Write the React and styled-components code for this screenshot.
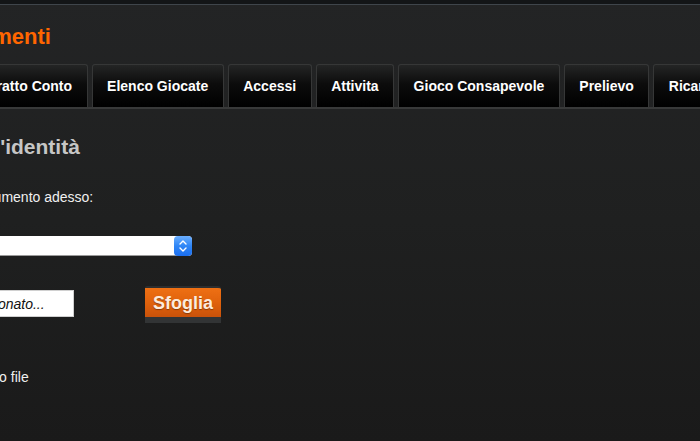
import React from "react";
import styled, { createGlobalStyle } from "styled-components";

const GlobalStyle = createGlobalStyle`
  html, body {
    margin: 0;
    padding: 0;
    height: 100%;
    background: #1a1a1a;
  }
  body {
    font-family: "Liberation Sans", Arial, sans-serif;
    overflow: hidden;
  }
`;

const Viewport = styled.div`
  width: 700px;
  height: 441px;
  overflow: hidden;
  background: linear-gradient(#232425 0%, #1f2020 50%, #1a1a1a 100%);
`;

const TopBar = styled.div`
  height: 4px;
  background: #131517;
  border-bottom: 1px solid #3f454b;
`;

/* the page is scrolled horizontally, so its left part is out of view */
const Shell = styled.div`
  margin-left: -151px;
  width: 1000px;
`;

const Header = styled.header`
  padding: 19px 0 0 5px;
  height: 40px;
`;

const PageTitle = styled.h1`
  margin: 0;
  font-size: 22px;
  line-height: 26px;
  font-weight: 700;
  color: #ff6600;
  white-space: nowrap;
`;

const TabBar = styled.nav`
  display: flex;
  gap: 4px;
  padding-left: 3px;
  border-bottom: 2px solid #383939;
  white-space: nowrap;
`;

const Tab = styled.a`
  display: flex;
  align-items: center;
  height: 43px;
  padding: 0 14.5px;
  box-sizing: border-box;
  border: 1px solid #363737;
  border-bottom: none;
  border-radius: 3px 3px 0 0;
  background: linear-gradient(#242525 0%, #0c0c0c 45%, #000 100%);
  color: #fff;
  font-size: 14px;
  font-weight: 700;
  text-decoration: none;
  flex-shrink: 0;
`;

const Main = styled.main`
  padding: 26px 0 0 17px;
`;

const SectionTitle = styled.h2`
  margin: 0;
  font-size: 21px;
  line-height: 24px;
  font-weight: 700;
  color: #c6c6c6;
  white-space: nowrap;
`;

const Text = styled.p`
  margin: ${(p) => p.$top || 0}px 0 0;
  font-size: 14px;
  line-height: 17px;
  color: #f0f0f0;
  white-space: nowrap;
`;

const SelectBox = styled.div`
  margin-top: 30px;
  width: 326px;
  height: 20px;
  display: flex;
  justify-content: flex-end;
  background: #fff;
  border-radius: 3px 4px 4px 3px;
  box-shadow: inset 0 -1px 0 #9a9a9a;
`;

const Stepper = styled.span`
  width: 18px;
  height: 20px;
  border-radius: 4px;
  background: linear-gradient(#6aaeff 0%, #2f86f6 50%, #1a6ef0 100%);
  display: flex;
  align-items: center;
  justify-content: center;
`;

const FileRow = styled.div`
  margin-top: 30px;
  display: flex;
  align-items: flex-start;
  gap: 71px;
`;

const FileName = styled.div`
  margin-top: 4px;
  width: 208px;
  height: 27px;
  box-sizing: border-box;
  padding-left: 22px;
  display: flex;
  align-items: center;
  background: #fff;
  border: 1px solid #d0d0d0;
  color: #111;
  font-size: 14px;
  font-style: italic;
  white-space: nowrap;
  overflow: hidden;
`;

const BrowseButton = styled.button`
  height: 37px;
  padding: 1px 8px 0;
  box-sizing: border-box;
  border: none;
  border-top: 2px solid #2d2e2f;
  border-bottom: 6px solid #323435;
  border-radius: 2px 3px 0 0;
  background: linear-gradient(#ee7014 0%, #e0620c 50%, #c9520a 100%);
  color: #fdebdc;
  font-family: "Liberation Sans", Arial, sans-serif;
  font-size: 18px;
  font-weight: 700;
  line-height: 28px;
  text-shadow: 0 1px 1px rgba(0, 0, 0, 0.35);
  cursor: pointer;
`;

const tabs = [
  "Documenti",
  "Estratto Conto",
  "Elenco Giocate",
  "Accessi",
  "Attivita",
  "Gioco Consapevole",
  "Prelievo",
  "Ricarica",
];

const StepperIcon = () => (
  <svg width="10" height="14" viewBox="0 0 10 14" fill="none">
    <path d="M2 5 L5 2 L8 5" stroke="#fff" strokeWidth="1.4" strokeLinecap="round" strokeLinejoin="round" />
    <path d="M2 9 L5 12 L8 9" stroke="#fff" strokeWidth="1.4" strokeLinecap="round" strokeLinejoin="round" />
  </svg>
);

const App = () => {
  return (
    <>
      <GlobalStyle />
      <Viewport>
        <TopBar />
        <Shell>
          <Header>
            <PageTitle>Carica i documenti</PageTitle>
          </Header>
          <TabBar>
            {tabs.map((t) => (
              <Tab key={t} href="#">
                {t}
              </Tab>
            ))}
          </TabBar>
          <Main>
            <SectionTitle>Documento d'identità</SectionTitle>
            <Text $top={30}>Scegli e carica il documento adesso:</Text>
            <SelectBox>
              <Stepper>
                <StepperIcon />
              </Stepper>
            </SelectBox>
            <FileRow>
              <FileName>Nessun file selezionato...</FileName>
              <BrowseButton>Sfoglia</BrowseButton>
            </FileRow>
            <Text $top={46}>Oppure invia un nuovo file</Text>
          </Main>
        </Shell>
      </Viewport>
    </>
  );
};

export default App;
